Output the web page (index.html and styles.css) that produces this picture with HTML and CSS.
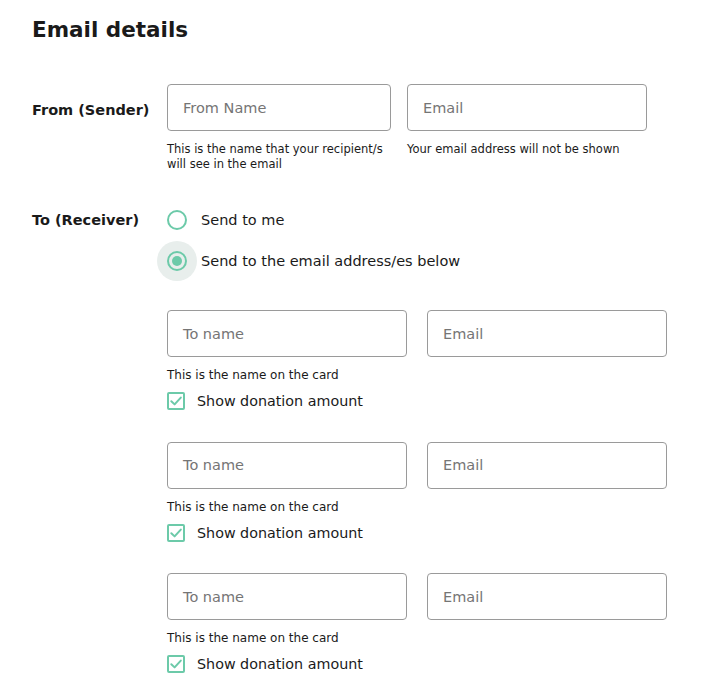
FILE: index.html
```html
<!DOCTYPE html>
<html>
<head>
<meta charset="utf-8">
<link rel="stylesheet" href="styles.css">
</head>
<body>
<div class="page">
  <h1 class="title">Email details</h1>

  <div class="section from">
    <div class="label">From (Sender)</div>
    <div class="content">
      <div class="pair">
        <div class="field w224">
          <div class="input">From Name</div>
          <div class="help">This is the name that your recipient/s will see in the email</div>
        </div>
        <div class="field w240">
          <div class="input">Email</div>
          <div class="help">Your email address will not be shown</div>
        </div>
      </div>
    </div>
  </div>

  <div class="section to">
    <div class="label">To (Receiver)</div>
    <div class="content">
      <div class="radio-row">
        <span class="radio-wrap"><span class="radio"></span></span>
        <span class="opt">Send to me</span>
      </div>
      <div class="radio-row">
        <span class="radio-wrap active"><span class="radio checked"></span></span>
        <span class="opt">Send to the email address/es below</span>
      </div>

      <div class="recipients">
        <div class="recipient">
          <div class="pair wide">
            <div class="input w240">To name</div>
            <div class="input w240">Email</div>
          </div>
          <div class="help">This is the name on the card</div>
          <div class="check-row"><span class="checkbox"><svg viewBox="0 0 14 14"><path d="M2.3 7.2 L5.6 10.4 L11.8 3.6" fill="none" stroke="#6ccaa9" stroke-width="2" stroke-linecap="round" stroke-linejoin="round"/></svg></span><span class="opt">Show donation amount</span></div>
        </div>
        <div class="recipient">
          <div class="pair wide">
            <div class="input w240">To name</div>
            <div class="input w240">Email</div>
          </div>
          <div class="help">This is the name on the card</div>
          <div class="check-row"><span class="checkbox"><svg viewBox="0 0 14 14"><path d="M2.3 7.2 L5.6 10.4 L11.8 3.6" fill="none" stroke="#6ccaa9" stroke-width="2" stroke-linecap="round" stroke-linejoin="round"/></svg></span><span class="opt">Show donation amount</span></div>
        </div>
        <div class="recipient">
          <div class="pair wide">
            <div class="input w240">To name</div>
            <div class="input w240">Email</div>
          </div>
          <div class="help">This is the name on the card</div>
          <div class="check-row"><span class="checkbox"><svg viewBox="0 0 14 14"><path d="M2.3 7.2 L5.6 10.4 L11.8 3.6" fill="none" stroke="#6ccaa9" stroke-width="2" stroke-linecap="round" stroke-linejoin="round"/></svg></span><span class="opt">Show donation amount</span></div>
        </div>
      </div>
    </div>
  </div>
</div>
</body>
</html>
```

FILE: styles.css
```css
* { box-sizing: border-box; }
html, body { margin: 0; padding: 0; background: #fff; }
body {
  font-family: "DejaVu Sans", "Noto Sans", sans-serif;
  color: #1a1a1a;
}
.page { padding: 14px 0 0 32px; }
.title {
  margin: 0;
  font-size: 21.5px;
  font-weight: bold;
  line-height: 32px;
}
.section { display: flex; }
.label {
  width: 135px;
  flex: none;
  font-size: 14.5px;
  font-weight: bold;
  line-height: 20px;
}
.from { margin-top: 38px; }
.from .label { padding-top: 16px; }
.to { margin-top: 38px; }
.to .label { padding-top: 0; }
.content { display: flex; flex-direction: column; }
.pair { display: flex; gap: 16px; }
.pair.wide { gap: 20px; }
.w224 { width: 224px; }
.w240 { width: 240px; }
.input {
  height: 47px;
  border: 1px solid #9a9a9a;
  border-radius: 4px;
  padding: 0 15px;
  display: flex;
  align-items: center;
  font-size: 14.5px;
  color: #757575;
}
.help {
  font-size: 12px;
  line-height: 15px;
  color: #1a1a1a;
  margin-top: 11px;
}
.from .help { font-size: 11.5px; }
.radio-row {
  display: flex;
  align-items: center;
  height: 40px;
  margin-left: -10px;
}
.radio-row + .radio-row { margin-top: 1px; }
.radio-row:first-child { margin-top: -10px; }
.radio-wrap {
  width: 40px;
  height: 40px;
  border-radius: 50%;
  display: flex;
  align-items: center;
  justify-content: center;
  flex: none;
}
.radio-wrap.active { background: #e8eeec; }
.radio {
  width: 20px;
  height: 20px;
  border: 2px solid #6ccaa9;
  border-radius: 50%;
  display: flex;
  align-items: center;
  justify-content: center;
}
.radio.checked::after {
  content: "";
  width: 10px;
  height: 10px;
  border-radius: 50%;
  background: #6ccaa9;
}
.opt {
  font-size: 14.5px;
  color: #1a1a1a;
  margin-left: 4px;
}
.check-row .opt { margin-left: 12px; font-size: 14.3px; }
.recipients { display: flex; flex-direction: column; margin-top: 29px; gap: 31.5px; }
.check-row {
  display: flex;
  align-items: center;
  margin-top: 9px;
  height: 18px;
}
.checkbox {
  width: 18px;
  height: 18px;
  border: 2px solid #6ccaa9;
  border-radius: 2px;
  display: flex;
  align-items: center;
  justify-content: center;
  flex: none;
}
.checkbox svg { width: 14px; height: 14px; display: block; }
```
